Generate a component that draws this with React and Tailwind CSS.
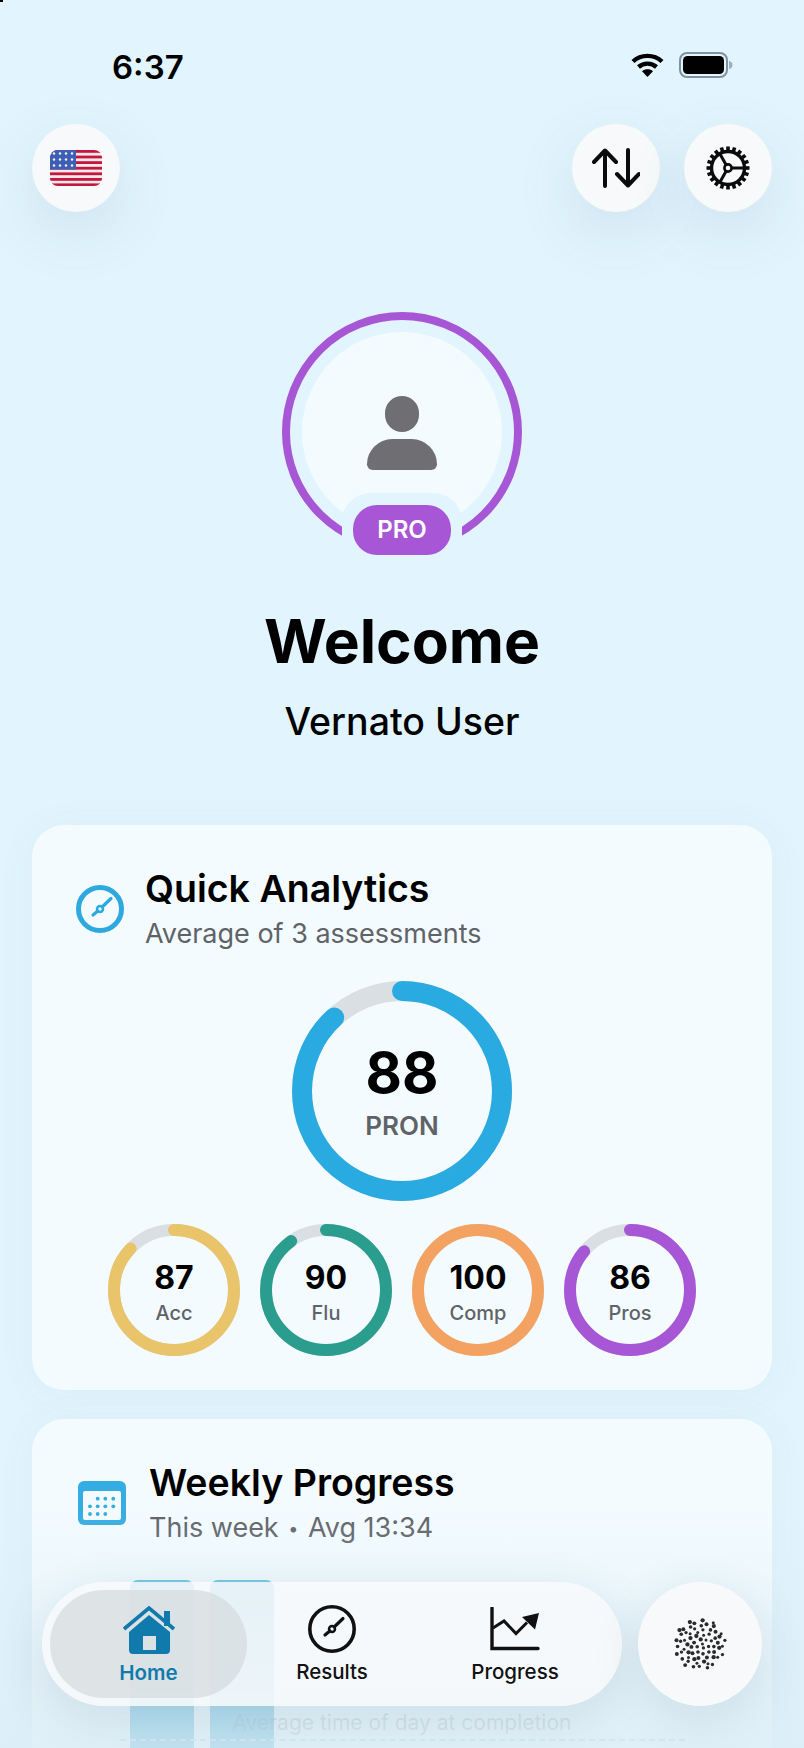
const dots = Array.from({ length: 70 }, (_, i) => {
  const a = i * 2.39996 + Math.sin(i * 3.7) * 0.07
  const r = 3.08 * Math.sqrt(i + 0.4) + Math.cos(i * 5.3) * 0.5
  return { x: 27 + r * Math.cos(a), y: 27 + r * Math.sin(a), s: 1.5 + (i * 7 % 5) * 0.16 }
})

const teeth = Array.from({ length: 20 }, (_, i) => i * 18)

function Ring({ size, stroke, value, color, children }) {
  const r = (size - stroke) / 2
  const c = 2 * Math.PI * r
  return (
    <div className="relative" style={{ width: size, height: size }}>
      <svg width={size} height={size} className="-rotate-90">
        <circle cx={size / 2} cy={size / 2} r={r} fill="none" stroke="#d9dfe2" strokeWidth={stroke} />
        <circle
          cx={size / 2}
          cy={size / 2}
          r={r}
          fill="none"
          stroke={color}
          strokeWidth={stroke}
          strokeLinecap="round"
          strokeDasharray={`${(c * value) / 100} ${c}`}
        />
      </svg>
      <div className="absolute inset-0 flex flex-col items-center justify-center">{children}</div>
    </div>
  )
}

function SmallRing({ value, label, color }) {
  return (
    <Ring size={132} stroke={12} value={value} color={color}>
      <div className="text-[32px] leading-[38px] font-bold text-black mt-[4px]">{value}</div>
      <div className="text-[20px] leading-[26px] font-medium text-[#5f6368] mt-[3px]">{label}</div>
    </Ring>
  )
}

function RoundButton({ children }) {
  return (
    <button className="w-[88px] h-[88px] rounded-full bg-[#f7f9fa] flex items-center justify-center shadow-[0_20px_60px_rgba(60,100,120,0.13)]">
      {children}
    </button>
  )
}

function Flag() {
  return (
    <svg width="52" height="36" viewBox="0 0 52 36">
      <defs>
        <clipPath id="flag">
          <rect width="52" height="36" rx="8" />
        </clipPath>
      </defs>
      <g clipPath="url(#flag)">
        <rect width="52" height="36" fill="#f6e9ee" />
        {[0, 5.6, 11.2, 16.8, 22.4, 28, 33.4].map((y) => (
          <rect key={y} y={y} width="52" height="2.8" fill="#c4173c" />
        ))}
        <rect width="26" height="19.6" fill="#3f5fb5" />
        {[3.5, 9.5, 15.5].map((y) =>
          [4, 10, 16, 22].map((x) => <circle key={`${x}-${y}`} cx={x} cy={y} r="1.2" fill="#f2f5fb" />)
        )}
      </g>
    </svg>
  )
}

function Arrows() {
  return (
    <svg width="48" height="40" viewBox="0 0 48 40" fill="none" stroke="#0b0b0b" strokeWidth="4" strokeLinecap="round" strokeLinejoin="round">
      <path d="M13 38V3M2 14 13 2.500 24 14" />
      <path d="M36 2v35M25 26l11 11.500L47 26" />
    </svg>
  )
}

function Gear() {
  return (
    <svg width="44" height="44" viewBox="0 0 44 44" fill="none" stroke="#0b0b0b">
      {teeth.map((d) => (
        <rect key={d} x="20.200" y="0.500" width="3.600" height="5" fill="#0b0b0b" stroke="none" transform={`rotate(${d} 22 22)`} />
      ))}
      <circle cx="22" cy="22" r="16.500" strokeWidth="3.400" />
      <circle cx="22" cy="22" r="3.600" strokeWidth="2.600" />
      <path d="M25.600 22H38M20.200 25.100 14 36M20.200 18.900 14 8" strokeWidth="3" />
    </svg>
  )
}

function Compass({ size, color, stroke }) {
  return (
    <svg width={size} height={size} viewBox="0 0 48 48" fill="none" stroke={color}>
      <circle cx="24" cy="24" r={24 - stroke / 2} strokeWidth={stroke} />
      <circle cx="24" cy="24" r="3" strokeWidth="2.500" />
      <path d="M35 13.500 26.200 22M21.800 26 17 30" strokeWidth="3.200" strokeLinecap="round" />
    </svg>
  )
}

function Calendar() {
  const rows = [
    [17.700, [19.700, 27.300, 35.300]],
    [25.300, [12, 19.700, 27.300, 35.300]],
    [33, [12, 19.700, 27.300]],
  ]
  return (
    <svg width="48" height="44" viewBox="0 0 48 44">
      <rect width="48" height="44" rx="6" fill="#35ace2" />
      <rect x="5" y="10" width="38" height="29" rx="2" fill="#f3fbff" />
      {rows.map(([y, xs]) => xs.map((x) => <circle key={`${x}-${y}`} cx={x} cy={y} r="1.900" fill="#35ace2" />))}
    </svg>
  )
}

function HomeIcon() {
  return (
    <svg width="54" height="48" viewBox="0 0 54 48">
      <path d="M42 5h6v15h-6z" fill="#0f7aab" />
      <path d="M2 23 27 2l25 21" fill="none" stroke="#0f7aab" strokeWidth="3.600" />
      <path fillRule="evenodd" d="M27 9 48 26v18a4 4 0 0 1-4 4H11a4 4 0 0 1-4-4V26zM21 30v14h13V30z" fill="#0f7aab" />
    </svg>
  )
}

function ChartIcon() {
  return (
    <svg width="50" height="44" viewBox="0 0 50 44" fill="none" stroke="#111">
      <path d="M2 1v40.500h46" strokeWidth="3.400" strokeLinecap="round" />
      <path d="M3 21 14 14l12 12.500 11-11" strokeWidth="3" />
      <path d="M49 6 32 10l13 12.500z" fill="#111" stroke="none" />
    </svg>
  )
}

function Blob() {
  return (
    <svg width="54" height="54" viewBox="0 0 54 54">
      {dots.map((d, i) => (
        <circle key={i} cx={d.x} cy={d.y} r={d.s} fill="#2b2b2b" />
      ))}
    </svg>
  )
}

function NavItem({ active, label, children }) {
  return (
    <div
      className={
        active
          ? 'w-[197px] h-[108px] rounded-full bg-[#d5dcdf]/75 flex flex-col items-center pt-[16px] text-[#0f7aab] font-semibold'
          : 'flex flex-col items-center pt-[3px] text-[#111] font-medium'
      }
    >
      <div className="h-[48px] flex items-center">{children}</div>
      <div className="text-[20.500px] leading-[28px] mt-[5px] whitespace-nowrap">{label}</div>
    </div>
  )
}

export default function App() {
  return (
    <div className="relative w-[804px] h-[1748px] overflow-hidden bg-[#e2f5fe] font-[Inter,sans-serif]">
      <div className="absolute top-0 left-0 w-[3px] h-[2px] bg-black" />

      {/* status bar */}
      <div className="h-[124px] flex justify-between pl-[112px] pr-[71px] pt-[47px]">
        <div className="text-[33px] leading-[40px] font-semibold text-black">6:37</div>
        <div className="flex gap-[15px] mt-[5px] h-[26px] items-center">
          <svg width="33" height="24" viewBox="0 0 33 24" fill="none" stroke="#000" strokeWidth="4.400">
            <path d="M2 8.500C10 1 23 1 31 8.500M7.500 14c5-4.500 13-4.500 18 0" />
            <path d="M16.500 24 11 18.300c3-2.600 8-2.600 11 0z" fill="#000" stroke="none" />
          </svg>
          <svg width="54" height="26" viewBox="0 0 54 26">
            <rect x="1" y="1" width="47" height="24" rx="7" fill="none" stroke="#7f939c" strokeWidth="2" />
            <rect x="4" y="4" width="41" height="18" rx="4.500" fill="#000" />
            <path d="M50 9c2.500.5 3.500 2 3.500 4s-1 3.500-3.500 4z" fill="#9fb0b8" />
          </svg>
        </div>
      </div>

      {/* toolbar */}
      <div className="flex justify-between px-8">
        <RoundButton><Flag /></RoundButton>
        <div className="flex gap-6">
          <RoundButton><Arrows /></RoundButton>
          <RoundButton><Gear /></RoundButton>
        </div>
      </div>

      {/* avatar */}
      <div className="relative w-[240px] h-[240px] mx-auto mt-[100px] rounded-full border-[8px] border-[#a757d5] flex items-center justify-center">
        <div className="w-[200px] h-[200px] rounded-full bg-[#f3fbff] flex flex-col items-center pt-[64px]">
          <div className="w-[34px] h-[36px] rounded-full bg-[#6e6e73]" />
          <div className="w-[70px] h-[31px] mt-[7px] rounded-t-[35px] rounded-b-[8px] bg-[#6e6e73]" />
        </div>
        <div className="absolute left-[52px] top-[173px] w-[120px] h-[80px] rounded-t-[28px] bg-[#e2f5fe] flex justify-center pt-[12px]">
          <div className="w-[98px] h-[50px] rounded-[24px] bg-[#a757d5] text-white text-[24px] leading-[50px] font-semibold text-center">PRO</div>
        </div>
      </div>

      <div className="mt-[53px] text-center text-[60.500px] leading-[72px] font-bold text-black">Welcome</div>
      <div className="mt-[23px] text-center text-[37.500px] leading-[44px] font-medium text-black">Vernato User</div>

      {/* quick analytics */}
      <div className="mt-[81px] mx-8 h-[565px] rounded-[32px] bg-[#f3fbff] shadow-[0_4px_40px_rgba(60,100,120,0.05)] flex flex-col items-center pt-[41px]">
        <div className="self-start flex items-center pl-[44px] gap-[21px]">
          <Compass size={48} color="#2ea9e0" stroke={5} />
          <div>
            <div className="text-[37.500px] leading-[46px] font-semibold text-black">Quick Analytics</div>
            <div className="text-[27px] leading-[34px] mt-[5px] text-[#5f6368]">Average of 3 assessments</div>
          </div>
        </div>
        <div className="mt-[30px]">
          <Ring size={220} stroke={20} value={88} color="#29abe2">
            <div className="text-[56px] leading-[64px] font-bold text-black">88</div>
            <div className="text-[26px] leading-[32px] font-semibold text-[#5f6368] mt-[5px]">PRON</div>
          </Ring>
        </div>
        <div className="flex gap-5 mt-[23px]">
          <SmallRing value={87} label="Acc" color="#e9c46a" />
          <SmallRing value={90} label="Flu" color="#2a9d8f" />
          <SmallRing value={100} label="Comp" color="#f4a261" />
          <SmallRing value={86} label="Pros" color="#a757d5" />
        </div>
      </div>

      {/* weekly progress */}
      <div className="relative mt-[29px] mx-8 h-[400px] rounded-[32px] bg-[#f3fbff] shadow-[0_4px_40px_rgba(60,100,120,0.05)] pt-[41px]">
        <div className="flex items-center pl-[46px] gap-[23px]">
          <Calendar />
          <div>
            <div className="text-[37.500px] leading-[46px] font-semibold text-black">Weekly Progress</div>
            <div className="text-[27px] leading-[34px] mt-[5px] text-[#5f6368]">
              This week <span className="text-[18px] align-[2px] mx-[2px]">•</span> Avg 13:34
            </div>
          </div>
        </div>
        <div className="flex gap-4 pl-[98px] mt-[34px]">
          <div className="w-16 h-[200px] rounded-t-[8px] bg-[#5cb8de]" />
          <div className="w-16 h-[200px] rounded-t-[8px] bg-[#5cb8de]" />
        </div>
        <div className="absolute left-0 right-0 top-[290px] text-center text-[21px] leading-[28px] text-[#5f6368]/40">Average time of day at completion</div>
        <div className="absolute left-[88px] w-[565px] top-[320px] border-t-2 border-dashed border-[#c3d2da]" />
      </div>

      {/* bottom fade */}
      <div className="absolute left-0 right-0 bottom-0 h-[240px] bg-gradient-to-b from-[#dceef7]/0 to-[#dbedf6]/80" />

      {/* tab bar */}
      <div className="absolute left-[42px] top-[1582px] w-[720px] flex gap-4">
        <div className="w-[580px] h-[124px] rounded-full bg-[#f8f9fa]/85 shadow-[0_12px_48px_rgba(60,100,120,0.14)] flex items-center pl-2">
          <NavItem active label="Home"><HomeIcon /></NavItem>
          <div className="ml-[45px] w-[80px] flex justify-center">
            <NavItem label="Results"><Compass size={48} color="#111" stroke={3.600} /></NavItem>
          </div>
          <div className="ml-[103px] w-[80px] flex justify-center">
            <NavItem label="Progress"><ChartIcon /></NavItem>
          </div>
        </div>
        <div className="w-[124px] h-[124px] rounded-full bg-[#f8f9fa] shadow-[0_12px_48px_rgba(60,100,120,0.14)] flex items-center justify-center">
          <Blob />
        </div>
      </div>
    </div>
  )
}
